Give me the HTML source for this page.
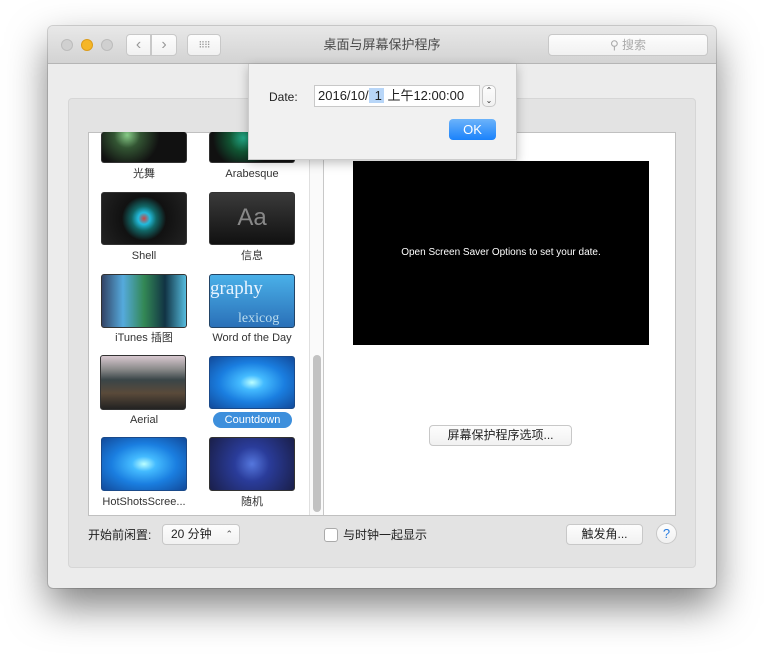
<!DOCTYPE html>
<html><head><meta charset="utf-8"><style>
*{margin:0;padding:0;box-sizing:border-box}
body{width:764px;height:662px;background:#fff;position:relative;overflow:hidden;font-family:"Liberation Sans","Noto Sans CJK SC",sans-serif;font-size:12px;color:#222}
.a{position:absolute}
.win{left:48px;top:26px;width:668px;height:562px;background:#ececec;border-radius:5px;box-shadow:0 18px 40px rgba(0,0,0,.5),0 0 0 1px rgba(0,0,0,.15)}
.tb{left:48px;top:26px;width:668px;height:38px;background:linear-gradient(#e8e8e8,#d3d3d3);border-radius:5px 5px 0 0;border-bottom:1px solid #b5b5b5}
.dot{width:12px;height:12px;border-radius:50%;top:39px;background:#d0d0d0;border:1px solid #bcbcbc}
.btn{background:linear-gradient(#fdfdfd,#f1f1f1);border:1px solid #c8c8c8;border-radius:4px}
.panel{left:68px;top:98px;width:628px;height:470px;background:#e3e3e3;border:1px solid #d6d6d6;border-radius:4px}
.list{left:88px;top:132px;width:588px;height:384px;background:#fff;border:1px solid #c0c0c0}
.th{width:86px;border-radius:3px;border:1px solid #333}
.lb{width:108px;text-align:center;font-size:11px;color:#333;line-height:14px;height:14px}
</style></head><body>
<div class="a win"></div>
<div class="a tb"></div>
<div class="a dot" style="left:61px"></div>
<div class="a dot" style="left:81px;background:#f5b626;border-color:#dc9c1a"></div>
<div class="a dot" style="left:101px"></div>
<div class="a btn" style="left:126px;top:34px;width:25px;height:22px;border-radius:4px 0 0 4px;color:#999;text-align:center;font-size:16px;line-height:19px">‹</div>
<div class="a btn" style="left:151px;top:34px;width:26px;height:22px;border-radius:0 4px 4px 0;color:#999;text-align:center;font-size:16px;line-height:19px">›</div>
<div class="a btn" style="left:187px;top:34px;width:34px;height:22px;color:#999;text-align:center;font-size:9px;line-height:20px;letter-spacing:-1px">⠿⠿</div>
<div class="a" style="left:0;width:764px;top:36px;text-align:center;font-size:13px;color:#4a4a4a;line-height:18px">桌面与屏幕保护程序</div>
<div class="a btn" style="left:548px;top:34px;width:160px;height:22px;color:#aaa;text-align:center;line-height:20px;font-size:12px">⚲ 搜索</div>

<div class="a panel"></div>
<div class="a list"></div>
<div class="a" style="left:309px;top:133px;width:15px;height:382px;background:#fafafa;border-left:1px solid #e0e0e0;border-right:1px solid #c8c8c8"></div>
<div class="a" style="left:313px;top:355px;width:8px;height:157px;background:#c2c2c2;border-radius:4px"></div>

<div class="a th" style="left:101px;top:132px;height:31px;border-top:none;background:radial-gradient(circle at 30% 10%,#8c8 0,#353 20%,#111 50%)"></div>
<div class="a th" style="left:209px;top:132px;height:31px;border-top:none;background:radial-gradient(circle at 40% 20%,#2a8 0,#153 25%,#111 55%)"></div>
<div class="a lb" style="left:90px;top:167px">光舞</div>
<div class="a lb" style="left:198px;top:167px">Arabesque</div>

<div class="a th" style="left:101px;top:192px;height:53px;background:radial-gradient(circle,#c44 0,#2bd 12%,#166 25%,#111 45%,#222 100%)"></div>
<div class="a th" style="left:209px;top:192px;height:53px;background:linear-gradient(#3a3a3a,#111);color:#888;font-size:24px;text-align:center;line-height:50px">Aa</div>
<div class="a lb" style="left:90px;top:249px">Shell</div>
<div class="a lb" style="left:198px;top:249px">信息</div>

<div class="a th" style="left:101px;top:274px;height:54px;background:linear-gradient(90deg,#346 0,#5ad 25%,#385 50%,#134 75%,#5bd 100%)"></div>
<div class="a th" style="left:209px;top:274px;height:54px;border-color:#246;background:linear-gradient(#4ab0e8,#2a70b8);color:#e8f4ff;font-family:'Liberation Serif',serif;font-size:19px;line-height:28px;overflow:hidden;white-space:nowrap">graphy<br><span style="font-size:14px;padding-left:28px;color:#bde">lexicog</span></div>
<div class="a lb" style="left:90px;top:331px">iTunes 插图</div>
<div class="a lb" style="left:198px;top:331px">Word of the Day</div>

<div class="a th" style="left:100px;top:355px;height:55px;background:linear-gradient(#d8c8d0 0,#8a8a8a 25%,#3a4548 45%,#5a4a3a 70%,#222 100%)"></div>
<div class="a th" style="left:209px;top:356px;height:53px;border-color:#1a4a8a;background:radial-gradient(ellipse at 50% 50%,#bff 0,#4bf 20%,#1a7ee0 55%,#124a9a 100%)"></div>
<div class="a lb" style="left:90px;top:413px">Aerial</div>
<div class="a" style="left:213px;top:412px;width:79px;height:16px;background:#3d8fdc;border-radius:8px;color:#fff;font-size:11px;text-align:center;line-height:16px">Countdown</div>

<div class="a th" style="left:101px;top:437px;height:54px;border-color:#1a4a8a;background:radial-gradient(ellipse at 50% 50%,#bff 0,#4bf 20%,#1a7ee0 55%,#124a9a 100%)"></div>
<div class="a th" style="left:209px;top:437px;height:54px;background:radial-gradient(circle,#57d 0,#2a3c9a 35%,#1a1f4a 100%)"></div>
<div class="a lb" style="left:90px;top:495px">HotShotsScree...</div>
<div class="a lb" style="left:198px;top:495px">随机</div>

<div class="a" style="left:353px;top:161px;width:296px;height:184px;background:#000;color:#fff;font-size:10px;text-align:center;line-height:184px">Open Screen Saver Options to set your date.</div>
<div class="a btn" style="left:429px;top:425px;width:143px;height:21px;text-align:center;line-height:19px;font-size:12px;color:#222">屏幕保护程序选项...</div>

<div class="a" style="left:88px;top:527px;font-size:12px;line-height:16px">开始前闲置:</div>
<div class="a btn" style="left:162px;top:524px;width:78px;height:21px;line-height:19px;padding-left:8px;font-size:12px">20 分钟<span style="position:absolute;right:6px;top:0;font-size:9px;color:#555">⌃</span></div>
<div class="a" style="left:324px;top:528px;width:14px;height:14px;background:#fff;border:1px solid #aaa;border-radius:3px"></div>
<div class="a" style="left:343px;top:527px;font-size:12px;line-height:16px">与时钟一起显示</div>
<div class="a btn" style="left:566px;top:524px;width:77px;height:21px;text-align:center;line-height:19px;font-size:12px">触发角...</div>
<div class="a btn" style="left:656px;top:523px;width:21px;height:21px;border-radius:50%;text-align:center;color:#2a7de0;line-height:19px;font-size:13px">?</div>

<div class="a" style="left:248px;top:64px;width:269px;height:96px;background:#f1f1f1;box-shadow:0 3px 10px rgba(0,0,0,.25);border:1px solid #ccc;border-top:none"></div>
<div class="a" style="left:269px;top:89px;font-size:12px;line-height:16px">Date:</div>
<div class="a" style="left:314px;top:85px;width:166px;height:22px;background:#fff;border:1px solid #c8c8c8;font-size:13px;line-height:20px;padding-left:3px;white-space:nowrap">2016/10/<span style="background:#b8d6f8;padding:0 2px 0 6px">1</span> 上午12:00:00</div>
<div class="a btn" style="left:482px;top:85px;width:14px;height:22px;border-radius:5px;font-size:8px;text-align:center;line-height:10px;color:#333">⌃<br>⌄</div>
<div class="a" style="left:449px;top:119px;width:47px;height:21px;background:linear-gradient(#6cb3fa,#1a82fb);border-radius:4px;color:#fff;text-align:center;line-height:21px;font-size:13px">OK</div>
</body></html>
